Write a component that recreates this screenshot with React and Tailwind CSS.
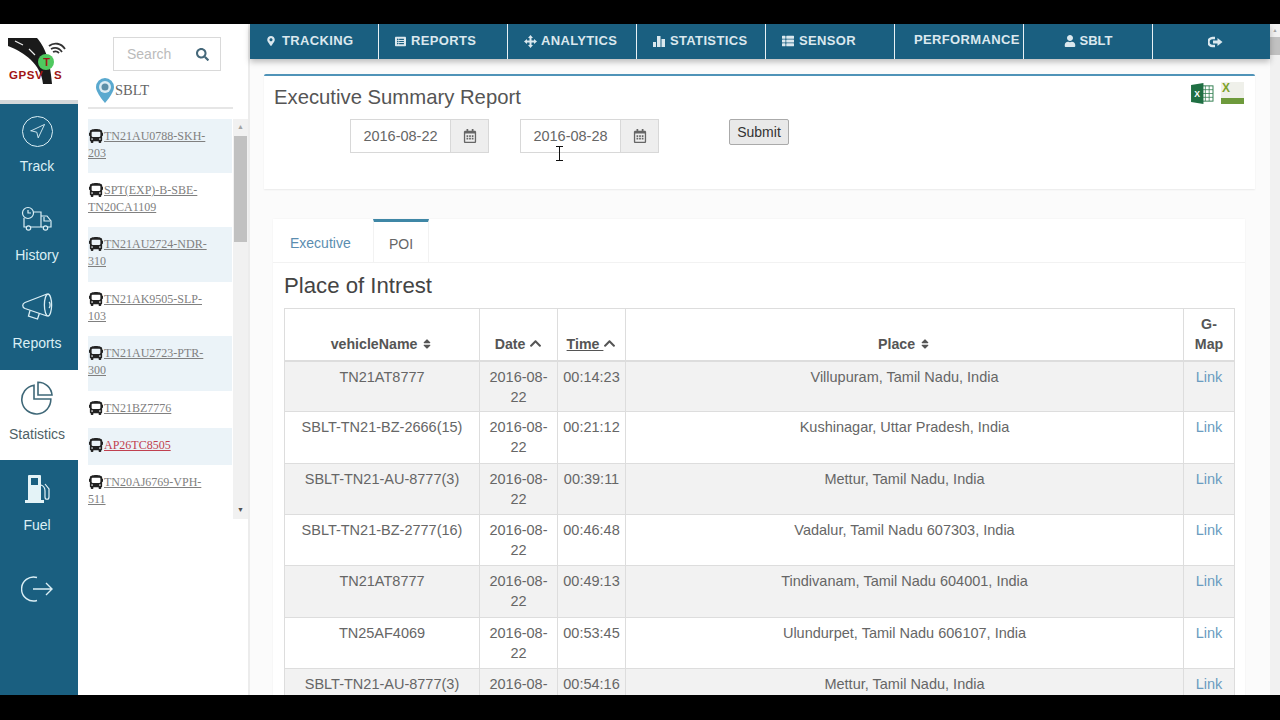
import { Navigation } from 'lucide-react';
import { FaMapMarkerAlt, FaListAlt, FaThList, FaUser, FaSearch, FaBus, FaRegCalendarAlt, FaSort, FaChevronUp } from 'react-icons/fa';

const VEHICLES = [
  { name: 'TN21AU0788-SKH-203', h: 'h-[54px]', tint: true },
  { name: 'SPT(EXP)-B-SBE-TN20CA1109', h: 'h-[54px]' },
  { name: 'TN21AU2724-NDR-310', h: 'h-[55px]', tint: true },
  { name: 'TN21AK9505-SLP-103', h: 'h-[54px]' },
  { name: 'TN21AU2723-PTR-300', h: 'h-[55px]', tint: true },
  { name: 'TN21BZ7776', h: 'h-[37px]' },
  { name: 'AP26TC8505', h: 'h-[37px]', tint: true, red: true },
  { name: 'TN20AJ6769-VPH-511', h: 'h-[54px]' },
];

const ROWS = [
  ['TN21AT8777', '00:14:23', 'Villupuram, Tamil Nadu, India'],
  ['SBLT-TN21-BZ-2666(15)', '00:21:12', 'Kushinagar, Uttar Pradesh, India'],
  ['SBLT-TN21-AU-8777(3)', '00:39:11', 'Mettur, Tamil Nadu, India'],
  ['SBLT-TN21-BZ-2777(16)', '00:46:48', 'Vadalur, Tamil Nadu 607303, India'],
  ['TN21AT8777', '00:49:13', 'Tindivanam, Tamil Nadu 604001, India'],
  ['TN25AF4069', '00:53:45', 'Ulundurpet, Tamil Nadu 606107, India'],
  ['SBLT-TN21-AU-8777(3)', '00:54:16', 'Mettur, Tamil Nadu, India'],
];

function TruckClock() {
  return (
    <svg width="32" height="28" viewBox="0 0 32 28" fill="none" stroke="currentColor" strokeWidth="1.2">
      <circle cx="7" cy="7" r="5.5" />
      <path d="M7 4v3h3" />
      <path d="M12.5 6H20v15H9.5M3 12v9h2" />
      <path d="M20 10h6l4 5v6h-3M20 21h2" />
      <path d="M23 11v4h6" />
      <circle cx="7.5" cy="22" r="2.2" />
      <circle cx="24.5" cy="22" r="2.2" />
    </svg>
  );
}

function Horn() {
  return (
    <svg width="32" height="28" viewBox="0 0 32 28" fill="none" stroke="currentColor" strokeWidth="1.3">
      <ellipse cx="27" cy="12" rx="3.6" ry="11" />
      <path d="M26 1L4 9.5c-3 1.2-3 4.8 0 6L26 23" />
      <path d="M9 17.5l-1.5 5.5 9 3 2-6" />
      <path d="M28 9c1.5 1 1.5 5 0 6" />
    </svg>
  );
}

function PieIcon() {
  return (
    <svg width="34" height="34" viewBox="0 0 34 34" fill="none" stroke="currentColor" strokeWidth="1.6">
      <path d="M14 4.2A14.5 14.5 0 1 0 30.8 18H14z" />
      <path d="M18 1.2V14h14A14 14 0 0 0 18 1.2z" />
    </svg>
  );
}

function FuelPump() {
  return (
    <svg width="26" height="30" viewBox="0 0 26 30" fill="none">
      <path d="M5 1h11a1 1 0 0 1 1 1v24H4V2a1 1 0 0 1 1-1z" fill="#e4f3f7" />
      <rect x="7" y="4" width="7" height="7" fill="#1a5f80" />
      <rect x="1" y="26" width="19" height="3" fill="#e4f3f7" />
      <path d="M17 11c3 1 4 3 4 6v6c0 3 4 3 4 0v-8l-4-5" stroke="#e4f3f7" strokeWidth="1.2" />
    </svg>
  );
}

function LogoutRound() {
  return (
    <svg width="32" height="28" viewBox="0 0 32 28" fill="none" stroke="currentColor" strokeWidth="1.4">
      <path d="M16 2.5A12 12 0 1 0 16 25.5" />
      <path d="M12 14h19M25 8l6 6-6 6" />
    </svg>
  );
}

function Logo() {
  return (
    <svg width="62" height="56" viewBox="0 0 62 56">
      <path d="M0 4h29c7 8 13 20 15 46h-9C33 30 16 18 0 12z" fill="#1a1a1a" />
      <path d="M7 7l8 4M21 15l6 6" stroke="#eee" strokeWidth="1.2" />
      <path d="M41 12c5-4 12-3 16 3M43 15c4-2 8-1 11 3M45 18c2-1 4-1 6 1" stroke="#333" strokeWidth="1.8" fill="none" />
      <circle cx="38" cy="28" r="8" fill="#4fc95f" />
      <text x="38.5" y="32" textAnchor="middle" fontSize="11" fontWeight="700" fill="#a01818" fontFamily="Liberation Sans">T</text>
      <text x="1" y="45" fontSize="11.5" fontWeight="700" fill="#a11414" letterSpacing="0.6" fontFamily="Liberation Sans">GPSV</text>
      <text x="46" y="45" fontSize="11.5" fontWeight="700" fill="#a11414" fontFamily="Liberation Sans">S</text>
    </svg>
  );
}

function Pin() {
  return (
    <svg width="18" height="25" viewBox="0 0 18 25">
      <path d="M9 0a9 9 0 0 1 9 9c0 6-9 16-9 16S0 15 0 9a9 9 0 0 1 9-9z" fill="#5aa9cf" />
      <circle cx="9" cy="9" r="6" fill="#dcecf4" />
      <circle cx="9" cy="9" r="3.5" fill="#5d8fa8" />
    </svg>
  );
}

function ExcelIcon() {
  return (
    <svg width="23" height="21" viewBox="0 0 24 22">
      <rect x="9" y="3" width="14" height="16" fill="#fff" stroke="#2f7d4f" />
      <path d="M15 3v16M19 3v16M9 7h14M9 11h14M9 15h14" stroke="#2f7d4f" strokeWidth="0.8" />
      <path d="M0 2l13-2v22L0 20z" fill="#1f6f43" />
      <text x="6.5" y="14.5" textAnchor="middle" fontSize="9" fontWeight="700" fill="#fff" fontFamily="Liberation Sans">X</text>
    </svg>
  );
}

function CsvIcon() {
  return (
    <svg width="23" height="24" viewBox="0 0 23 24">
      <rect x="0" y="1" width="23" height="22" fill="#eff0ea" />
      <rect x="0" y="17" width="23" height="6" fill="#6e9a3c" />
      <text x="5" y="11" textAnchor="middle" fontSize="12" fontWeight="700" fill="#7ea32c" fontFamily="Liberation Sans">X</text>
    </svg>
  );
}

function MoveIcon() {
  return (
    <svg width="13" height="13" viewBox="0 0 13 13" fill="currentColor">
      <path d="M6.5 0L9 3H7.5v2.5H10V4l3 2.5L10 9V7.5H7.5V10H9l-2.5 3L4 10h1.5V7.5H3V9L0 6.5 3 4v1.500h2.500V3H4z" />
    </svg>
  );
}

function BarsIcon() {
  return (
    <svg width="12" height="12" viewBox="0 0 12 12" fill="currentColor">
      <rect x="0" y="7" width="3" height="5" />
      <rect x="4" y="1" width="3.5" height="11" />
      <rect x="8.5" y="4" width="3.5" height="8" />
    </svg>
  );
}

function LogoutGlyph() {
  return (
    <svg width="15" height="12" viewBox="0 0 15 12" fill="none" stroke="currentColor">
      <path d="M7 2H4.500a4 4 0 0 0 0 8H7" strokeWidth="2.4" />
      <path d="M5 6h5" strokeWidth="3" />
      <path d="M9.500 2l5 4-5 4z" fill="currentColor" stroke="none" />
    </svg>
  );
}

function SideItem({ icon, label, active, className }) {
  return (
    <div className={`flex flex-col items-center pr-[4px] ${active ? 'bg-white text-[#3f6878]' : 'text-[#dbeff5]'} ${className}`}>
      <div className="h-[36px] flex items-center justify-center">{icon}</div>
      <div className={`text-[14px] leading-[20px] ${active ? 'text-[#4f5f66]' : ''}`}>{label}</div>
    </div>
  );
}

function TopItem({ icon, label, className }) {
  return (
    <div className={`w-[129px] h-full flex items-center pb-[1px] border-r border-[#e8f1f5] text-[13px] font-bold text-[#dbe8ee] ${className}`}>
      {icon}
      <span>{label}</span>
    </div>
  );
}

function DateField({ value, className }) {
  return (
    <div className={`flex h-[34px] w-[139px] border border-[#d8d8d8] text-[14.5px] text-[#666] ${className}`}>
      <div className="w-[99px] pt-[1px] flex items-center justify-center bg-white">{value}</div>
      <div className="flex-1 flex items-center justify-center bg-[#eeeeee] border-l border-[#d8d8d8] text-[#666]">
        <FaRegCalendarAlt size={14} />
      </div>
    </div>
  );
}

export default function App() {
  return (
    <div className="relative w-[1280px] h-[720px] bg-black pt-[24px] pb-[25px] overflow-hidden font-['Liberation_Sans',Arial,sans-serif]">
      <div className="flex h-full bg-[#fbfbfb] overflow-hidden">
        {/* icon rail */}
        <aside className="w-[78px] shrink-0 flex flex-col bg-[#1a5f80]">
          <div className="h-[76px] bg-white flex items-center justify-center shrink-0">
            <Logo />
          </div>
          <div className="h-[4px] bg-[#d4d8da] shrink-0" />
          <SideItem className="h-[87px] pt-[9px] gap-[7px]" icon={
            <span className="w-[31px] h-[31px] rounded-full border-[1.5px] border-[#dbeff5] flex items-center justify-center">
              <Navigation size={17} strokeWidth={1.3} />
            </span>
          } label="Track" />
          <SideItem className="h-[89px] pt-[11px] gap-[7px]" icon={<TruckClock />} label="History" />
          <SideItem className="h-[90px] pt-[9px] gap-[8px]" icon={<Horn />} label="Reports" />
          <SideItem active className="h-[90px] pt-[10px] gap-[8px]" icon={<PieIcon />} label="Statistics" />
          <SideItem className="h-[90px] pt-[11px] gap-[8px]" icon={<FuelPump />} label="Fuel" />
          <div className="pt-[25px] pr-[4px] flex justify-center text-[#dbeff5]"><LogoutRound /></div>
        </aside>

        {/* vehicle list */}
        <section className="w-[172px] shrink-0 bg-white border-r-2 border-[#ececec] flex flex-col">
          <div className="ml-[35px] mt-[13px] w-[108px] h-[34px] border border-[#d9d9d9] flex items-center justify-between pl-[13px] pr-[11px] text-[14px] text-[#bbbbbb]">
            <span>Search</span>
            <FaSearch size={13} className="text-[#45687a]" />
          </div>
          <div className="ml-[18px] mt-[7px] flex items-center gap-[1px] h-[25px] font-['Liberation_Serif',serif] text-[14.5px] text-[#666]">
            <Pin />
            <span>SBLT</span>
          </div>
          <div className="ml-[10px] mr-[15px] mt-[4px] h-[2px] bg-[#e6e6e6]" />
          <div className="flex mt-[10px] ml-[10px]">
            <div className="w-[144px] h-[400px] overflow-hidden">
              {VEHICLES.map((v) => (
                <div key={v.name} className={`${v.h} pt-[9px] pr-[14px] font-['Liberation_Serif',serif] text-[12px] leading-[17px] ${v.tint ? 'bg-[#ebf3f8]' : 'bg-white'}`}>
                  <FaBus size={14} className="inline-block align-[-3px] ml-[1px] mr-[1px] text-[#222]" />
                  <span className={`underline ${v.red ? 'text-[#c0404f]' : 'text-[#808080]'}`}>{v.name}</span>
                </div>
              ))}
            </div>
            <div className="w-[15px] ml-[1px] h-[400px] bg-[#f1f1f1] flex flex-col items-center">
              <div className="h-[17px] flex items-center text-[7px] text-[#a3a3a3]">▲</div>
              <div className="w-[13px] h-[106px] bg-[#c1c1c1]" />
              <div className="flex-1" />
              <div className="h-[17px] flex items-center text-[7px] text-[#505050]">▼</div>
            </div>
          </div>
        </section>

        <div className="flex-1 flex flex-col min-w-0">
          {/* top nav */}
          <header className="h-[35px] shrink-0 bg-[#1a5f80] flex shadow-[0_3px_6px_rgba(0,0,0,0.25)] z-10">
            <TopItem className="pl-[16px] tracking-[0.35px] gap-[6px]" icon={<FaMapMarkerAlt size={10} />} label="TRACKING" />
            <TopItem className="pl-[16px] tracking-[0.35px] gap-[5px]" icon={<FaListAlt size={11} />} label="REPORTS" />
            <TopItem className="pl-[16px] tracking-[0.35px] gap-[4px]" icon={<MoveIcon />} label="ANALYTICS" />
            <TopItem className="pl-[16px] tracking-[0.35px] gap-[5px]" icon={<BarsIcon />} label="STATISTICS" />
            <TopItem className="pl-[16px] tracking-[0.35px] gap-[5px]" icon={<FaThList size={12} />} label="SENSOR" />
            <TopItem className="pl-[19px] pb-[3px] tracking-[0.35px]" label="PERFORMANCE" />
            <TopItem className="justify-center gap-[4px]" icon={<FaUser size={12} />} label="SBLT" />
            <div className="flex-1 flex items-center justify-center pl-[8px] text-[#dbe8ee]"><LogoutGlyph /></div>
          </header>

          <div className="flex-1 flex min-h-0">
            <main className="flex-1 min-w-0 pl-[14px] pr-[15px] pt-[15px] overflow-hidden">
              {/* report filter card */}
              <div className="h-[115px] bg-white border-t-2 border-[#4f93b8] shadow-[0_1px_2px_rgba(0,0,0,0.07)] rounded-t-[2px] relative pl-[10px]">
                <h1 className="pt-[8px] text-[20.3px] leading-[27px] text-[#555]">Executive Summary Report</h1>
                <div className="flex items-start mt-[8px]">
                  <DateField value="2016-08-22" className="ml-[76px]" />
                  <DateField value="2016-08-28" className="ml-[31px]" />
                  <button className="ml-[70px] h-[26px] w-[60px] border border-[#aaaaaa] rounded-[2px] bg-[#e9e9e9] text-[14px] text-[#333]">Submit</button>
                </div>
                <div className="absolute right-[11px] top-[5px] flex items-center gap-[7px]">
                  <ExcelIcon />
                  <CsvIcon />
                </div>
              </div>

              {/* tabs panel */}
              <div className="mt-[30px] ml-[9px] mr-[10px] bg-white shadow-[0_0_2px_rgba(0,0,0,0.05)]">
                <div className="h-[44px] flex border-b border-[#f2f2f2] text-[14px]">
                  <div className="w-[100px] pt-[14px] pl-[17px] text-[#5b8db0]">Executive</div>
                  <div className="w-[56px] border-t-[3px] border-[#3f87a6] border-x border-x-[#f2f2f2] bg-white pt-[12px] text-center text-[#666]">POI</div>
                </div>
                <div className="px-[11px]">
                  <h2 className="pt-[9px] text-[22.2px] leading-[28px] text-[#444]">Place of Intrest</h2>
                  <table className="mt-[8px] w-[950px] table-fixed border-collapse text-[14.5px] text-[#666] text-center">
                    <colgroup>
                      <col className="w-[195px]" />
                      <col className="w-[78px]" />
                      <col className="w-[68px]" />
                      <col className="w-[558px]" />
                      <col className="w-[51px]" />
                    </colgroup>
                    <thead>
                      <tr className="h-[52px] text-[14.2px] font-bold text-[#555]">
                        <th className="border border-[#dddddd] border-b-2 align-bottom pb-[4px]">vehicleName <FaSort size={12} className="inline align-[-1px]" /></th>
                        <th className="border border-[#dddddd] border-b-2 align-bottom pb-[4px]">Date <FaChevronUp size={13} className="inline align-[-1px]" /></th>
                        <th className="border border-[#dddddd] border-b-2 align-bottom pb-[4px] underline">Time <FaChevronUp size={13} className="inline align-[-1px]" /></th>
                        <th className="border border-[#dddddd] border-b-2 align-bottom pb-[4px]">Place <FaSort size={12} className="inline align-[-1px]" /></th>
                        <th className="border border-[#dddddd] border-b-2 align-bottom pb-[6px] leading-[20px]">G-<br />Map</th>
                      </tr>
                    </thead>
                    <tbody>
                      {ROWS.map((r, i) => (
                        <tr key={i} className={`h-[51.33px] ${i % 2 === 0 ? 'bg-[#f2f2f2]' : 'bg-white'}`}>
                          <td className="border border-[#dddddd] align-top pt-[5px] leading-[20px]">{r[0]}</td>
                          <td className="border border-[#dddddd] align-top pt-[5px] px-[8px] leading-[20px]">2016-08-22</td>
                          <td className="border border-[#dddddd] align-top pt-[5px] leading-[20px]">{r[1]}</td>
                          <td className="border border-[#dddddd] align-top pt-[5px] leading-[20px]">{r[2]}</td>
                          <td className="border border-[#dddddd] align-top pt-[5px] leading-[20px] text-[#6a9cc0]">Link</td>
                        </tr>
                      ))}
                    </tbody>
                  </table>
                </div>
              </div>
            </main>
          </div>
        </div>

        {/* page scrollbar */}
        <div className="w-[10px] shrink-0 bg-[#f1f1f1] flex flex-col items-center">
          <div className="h-[13px] flex items-center text-[5px] text-[#a3a3a3]">▲</div>
          <div className="w-full h-[18px] bg-[#c1c1c1]" />
        </div>
      </div>

      {/* mouse cursor */}
      <svg className="absolute left-[555px] top-[146px]" width="9" height="15" viewBox="0 0 9 15" fill="none" stroke="#111" strokeWidth="1">
        <path d="M1 .5h7M4.5.5v14M1 14.5h7" />
      </svg>
    </div>
  );
}
